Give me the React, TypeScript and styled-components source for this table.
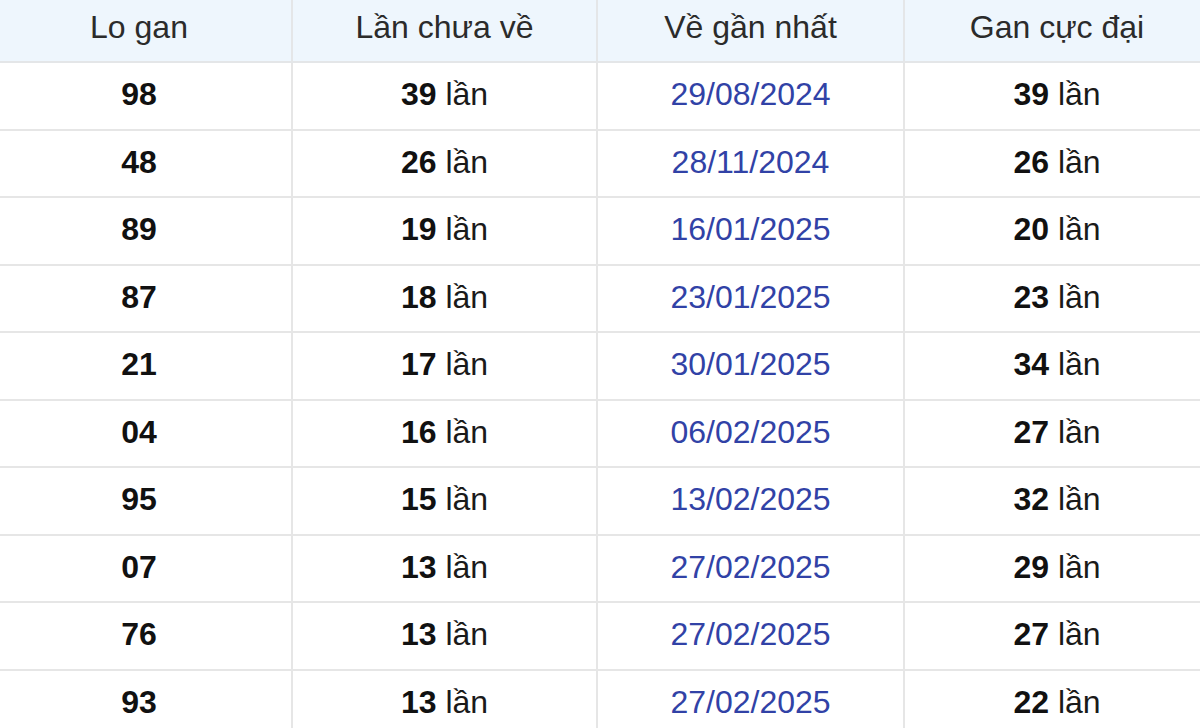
import styled, { createGlobalStyle } from "styled-components";

interface Row {
  lo: string;
  count: number;
  last: string;
  max: number;
}

const rows: Row[] = [
  { lo: "98", count: 39, last: "29/08/2024", max: 39 },
  { lo: "48", count: 26, last: "28/11/2024", max: 26 },
  { lo: "89", count: 19, last: "16/01/2025", max: 20 },
  { lo: "87", count: 18, last: "23/01/2025", max: 23 },
  { lo: "21", count: 17, last: "30/01/2025", max: 34 },
  { lo: "04", count: 16, last: "06/02/2025", max: 27 },
  { lo: "95", count: 15, last: "13/02/2025", max: 32 },
  { lo: "07", count: 13, last: "27/02/2025", max: 29 },
  { lo: "76", count: 13, last: "27/02/2025", max: 27 },
  { lo: "93", count: 13, last: "27/02/2025", max: 22 },
];

const GlobalStyle = createGlobalStyle`
  html, body {
    margin: 0;
    padding: 0;
    background: #ffffff;
    overflow: hidden;
  }
  body {
    font-family: "Liberation Sans", Arial, sans-serif;
  }
`;

export default function App() {
  return (
    <>
      <GlobalStyle />
      <Page>
        <GanTable>
          <colgroup>
            <col style={{ width: 306 }} />
            <col style={{ width: 305 }} />
            <col style={{ width: 307 }} />
            <col style={{ width: 306 }} />
          </colgroup>
          <thead>
            <tr>
              <HeadCell>Lo gan</HeadCell>
              <HeadCell>Lần chưa về</HeadCell>
              <HeadCell>Về gần nhất</HeadCell>
              <HeadCell>Gan cực đại</HeadCell>
            </tr>
          </thead>
          <tbody>
            {rows.map((r, i) => (
              <tr key={i}>
                <Cell>
                  <Bold>{r.lo}</Bold>
                </Cell>
                <Cell>
                  <Bold>{r.count}</Bold> lần
                </Cell>
                <Cell>
                  <DateText>{r.last}</DateText>
                </Cell>
                <Cell>
                  <Bold>{r.max}</Bold> lần
                </Cell>
              </tr>
            ))}
          </tbody>
        </GanTable>
      </Page>
    </>
  );
}

const Page = styled.div`
  width: 1200px;
  height: 728px;
  overflow: hidden;
`;

const GanTable = styled.table`
  margin: -9px 0 0 -15px;
  width: 1224px;
  table-layout: fixed;
  border-collapse: collapse;
  font-family: "Liberation Sans", Arial, sans-serif;
  font-size: 32px;
`;

const HeadCell = styled.th`
  height: 68px;
  padding: 0;
  background: #eef6fd;
  border: 2px solid #e4e6e8;
  color: #2b2b2b;
  font-weight: 400;
  text-align: center;
  vertical-align: middle;
`;

const Cell = styled.td`
  height: 63.5px;
  padding: 0 0 2px;
  border: 2px solid #e6e6e6;
  color: #1a1a1a;
  text-align: center;
  vertical-align: middle;
`;

const Bold = styled.span`
  font-weight: 700;
  color: #111111;
`;

const DateText = styled.span`
  color: #3142a6;
`;
